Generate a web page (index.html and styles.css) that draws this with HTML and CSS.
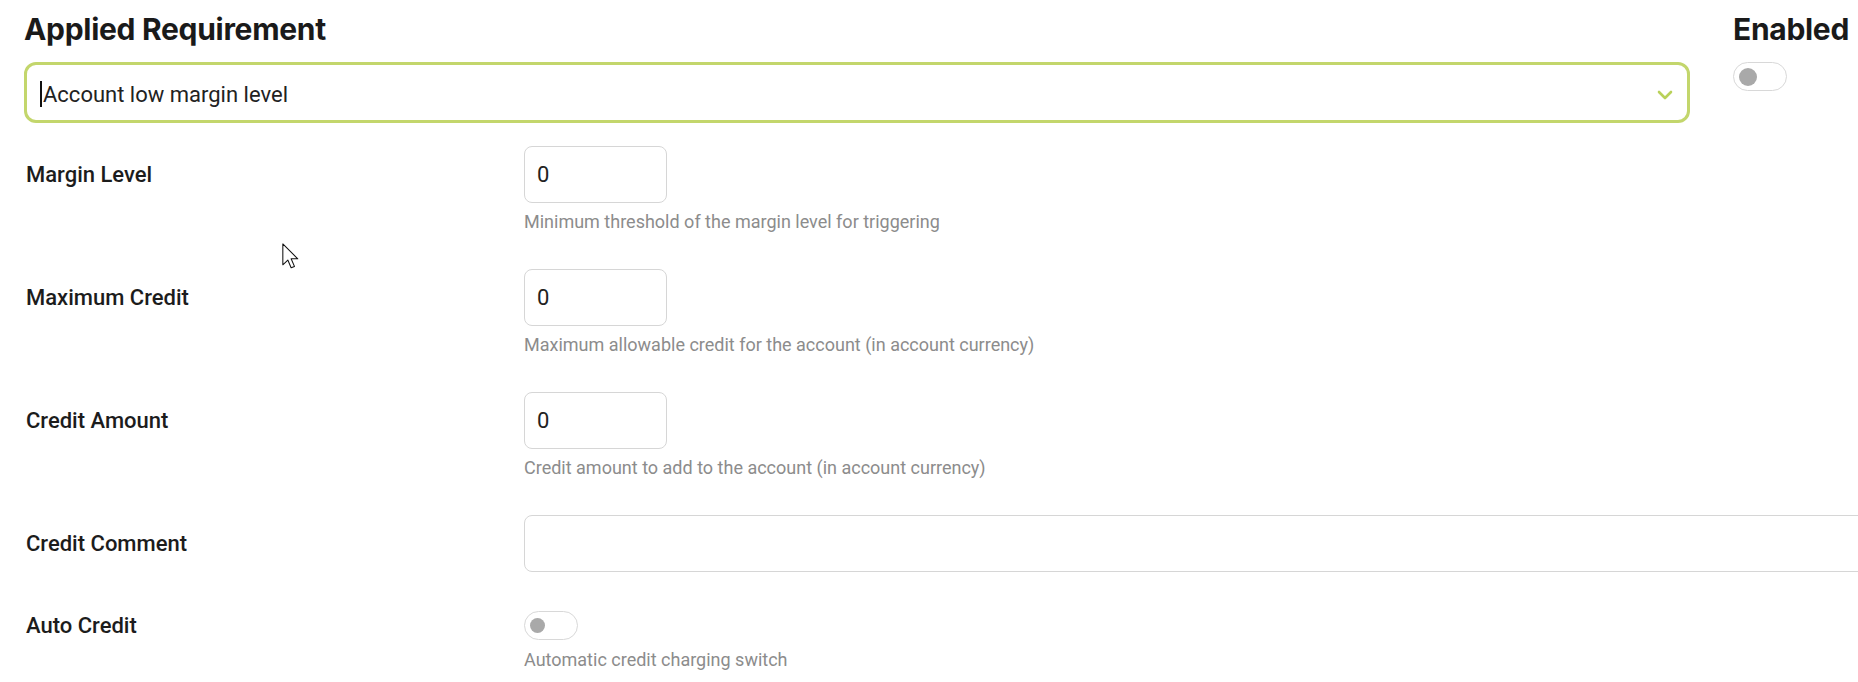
FILE: index.html
```html
<!DOCTYPE html>
<html>
<head>
  <title>Applied Requirement</title>
  <link rel="stylesheet" href="styles.css">
</head>
<body>

<div class="page">
  <div class="top">
    <div class="req">
      <h2 class="title">Applied Requirement</h2>
      <div class="select">
        <span class="caret"></span>
        <span class="select-value">Account low margin level</span>
        <svg class="chevron" width="16" height="10" viewBox="0 0 16 10">
          <path d="M2 2 L8 8 L14 2" fill="none" stroke="#b9d15a" stroke-width="2.6" stroke-linecap="round" stroke-linejoin="round"/>
        </svg>
      </div>
    </div>
    <div class="enabled">
      <h2 class="title">Enabled</h2>
      <div class="switch big"><span class="knob"></span></div>
    </div>
  </div>

  <div class="form">
    <div class="label">Margin Level</div>
    <div class="control">
      <input class="num" type="text" value="0">
      <div class="help">Minimum threshold of the margin level for triggering</div>
    </div>

    <div class="label">Maximum Credit</div>
    <div class="control">
      <input class="num" type="text" value="0">
      <div class="help">Maximum allowable credit for the account (in account currency)</div>
    </div>

    <div class="label">Credit Amount</div>
    <div class="control">
      <input class="num" type="text" value="0">
      <div class="help">Credit amount to add to the account (in account currency)</div>
    </div>

    <div class="label">Credit Comment</div>
    <div class="control">
      <input class="text" type="text" value="">
    </div>

    <div class="label short">Auto Credit</div>
    <div class="control toggle-row">
      <div class="switch"><span class="knob"></span></div>
      <div class="help">Automatic credit charging switch</div>
    </div>
  </div>
</div>

<!-- mouse pointer left in the capture -->
<svg class="pointer" width="18" height="28" viewBox="0 0 13 20">
  <path d="M0.6 0.6 L0.6 15.6 L4.2 12.2 L6.6 17.8 L9.0 16.8 L6.6 11.3 L11.4 11.3 Z" fill="#fff" stroke="#111" stroke-width="0.75" stroke-linejoin="round"/>
</svg>

</body>
</html>
```

FILE: styles.css
```css
html, body {
  overflow: hidden;
}
body {
  margin: 0;
  padding: 11px 0 0 24px;
  font-family: Roboto, "Liberation Sans", sans-serif;
  color: #1c1c1c;
  background: #fff;
}
.page {
  width: 1900px;
}
.top {
  display: grid;
  grid-template-columns: 1666px 1fr;
  column-gap: 43px;
}
.title {
  margin: 0 0 15px 0;
  font-family: Inter, "Liberation Sans", sans-serif;
  font-weight: 700;
  font-size: 30px;
  line-height: 36px;
  letter-spacing: -0.3px;
  color: #1a1a1a;
}
.select {
  position: relative;
  height: 61px;
  box-sizing: border-box;
  border: 3px solid #c3d66c;
  border-radius: 12px;
  display: flex;
  align-items: center;
  padding: 3px 14px 0 13px;
}
.caret {
  width: 2px;
  height: 26px;
  background: #111;
  margin-right: 1px;
}
.select-value {
  flex: 1;
  font-size: 22px;
  color: #222;
}
.chevron {
  margin-top: 2px;
}
.switch {
  width: 54px;
  height: 29px;
  box-sizing: border-box;
  border: 1px solid #d8d8d8;
  border-radius: 15px;
  background: #fff;
  display: flex;
  align-items: center;
  padding-left: 5px;
}
.knob {
  width: 15px;
  height: 15px;
  border-radius: 50%;
  background: #a9a9a9;
}
.switch.big {
  margin-top: 6px;
}
.switch.big .knob {
  width: 18px;
  height: 18px;
}
.form {
  margin-top: 23px;
  display: grid;
  grid-template-columns: 500px 1fr;
  row-gap: 35px;
}
.label {
  height: 57px;
  display: flex;
  align-items: center;
  padding-left: 2px;
  font-size: 22px;
  font-weight: 500;
  color: #1c1c1c;
}
.label.short {
  height: 37px;
}
.control input {
  display: block;
  box-sizing: border-box;
  height: 57px;
  border: 1px solid #d6d6d6;
  border-radius: 8px;
  padding: 0 12px;
  font-family: Roboto, "Liberation Sans", sans-serif;
  font-size: 22px;
  color: #222;
  background: #fff;
  outline: none;
}
.num {
  width: 143px;
}
.text {
  width: 100%;
}
.help {
  margin-top: 7px;
  font-size: 18px;
  line-height: 24px;
  color: #8c8c8c;
}
.toggle-row {
  padding-top: 4px;
}
.toggle-row .help {
  margin-top: 8px;
}
.pointer {
  position: absolute;
  left: 282px;
  top: 243px;
}
```
